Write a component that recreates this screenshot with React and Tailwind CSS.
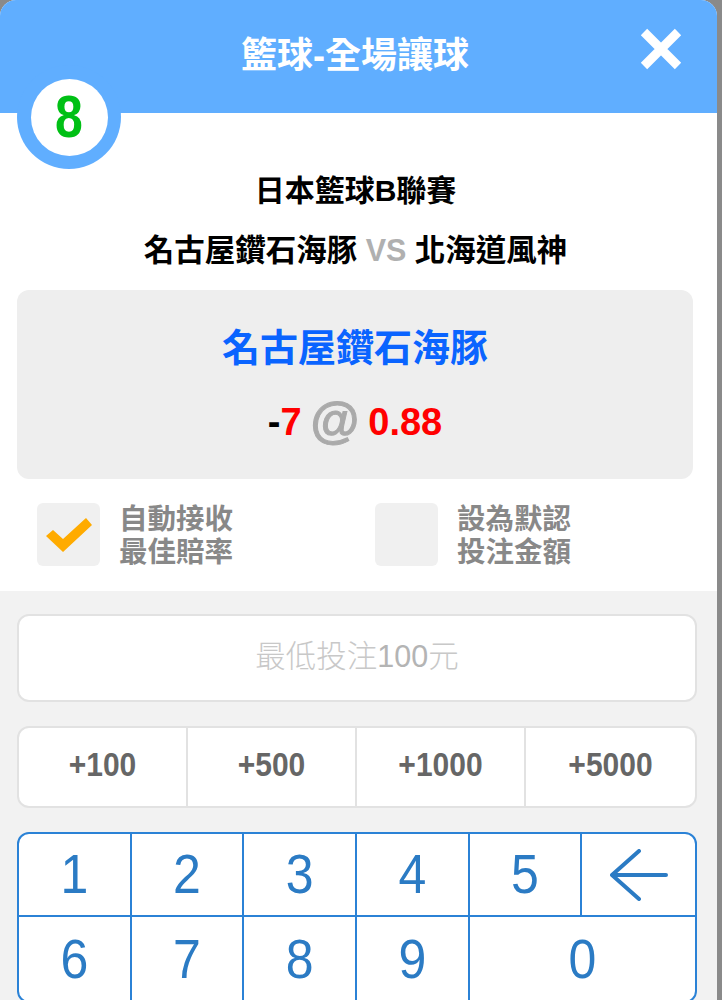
import React from 'react'

const sans = "font-['Liberation_Sans','Noto_Sans_CJK_TC',sans-serif]"

const chips = ['+100', '+500', '+1000', '+5000']

const Check = ({ checked, label1, label2, className }) => {
  return (
    <div className={`flex items-start ${className}`}>
      <div className='w-[63px] h-[63px] rounded-md bg-[#f0f0f0] flex items-center justify-center shrink-0'>
        {checked && (
          <svg width="46" height="34" viewBox="0 0 46 34">
            <polygon points="0,18 7,12 17,21 40,0 46,7 17,34" fill="#ffab00" />
          </svg>
        )}
      </div>
      <div className='ml-[19px] text-[28.5px] leading-[33px] font-bold text-[#888888]'>
        <div>{label1}</div>
        <div>{label2}</div>
      </div>
    </div>
  )
}

const Key = ({ children, className = '' }) => {
  return (
    <div className={`flex items-center justify-center text-[50px] text-[#2b7bc4] border-[#2b82d6] ${className}`}>
      <span className='scale-y-[1.1]'>{children}</span>
    </div>
  )
}

const App = () => {
  return (
    <div className={`w-[722px] h-[1000px] overflow-hidden bg-[#8a8a8a] ${sans}`}>
      <div className='w-[717px] h-[1000px] bg-white rounded-t-[16px] overflow-hidden flex flex-col'>
        {/* header */}
        <div className='relative h-[113px] shrink-0 bg-[#60aeff] flex items-center justify-center'>
          <div className='text-[36px] font-bold text-white mt-[-2px] ml-[-7px]'>籃球-全場讓球</div>
          <svg className='absolute right-[35px] top-[28px]' width="42" height="42" viewBox="0 0 42 42">
            <path d="M4 4 L38 38 M38 4 L4 38" stroke="#fff" strokeWidth="9" />
          </svg>
          <div className='absolute left-[17px] top-[65px] w-[104px] h-[104px] rounded-full bg-[#60aeff] flex items-center justify-center'>
            <div className='w-[77px] h-[77px] rounded-full bg-white flex items-center justify-center text-[50px] font-bold text-[#00c015]'>
              <span className='scale-y-[1.18]'>8</span>
            </div>
          </div>
        </div>

        {/* match info */}
        <div className='h-[478px] shrink-0 flex flex-col'>
          <div className='mt-[58px] pr-[6px] text-center text-[30px] leading-[40px] font-bold text-black'>日本籃球B聯賽</div>
          <div className='mt-[19px] pr-[6px] text-center text-[30.5px] leading-[40px] font-bold text-black'>
            名古屋鑽石海豚 <span className='text-[#b0b0b0]'>VS</span> 北海道風神
          </div>
          <div className='mt-[20px] ml-[17px] mr-[24px] h-[189px] rounded-xl bg-[#eeeeee] flex flex-col items-center'>
            <div className='mt-[33px] text-[38px] leading-[50px] font-bold text-[#0a64ff]'>名古屋鑽石海豚</div>
            <div className='mt-[23px] text-[38px] leading-[50px] font-bold flex items-center'>
              <span className='text-black'>-</span>
              <span className='text-[#ff0000]'>7</span>
              <span className='text-[#aaaaaa] text-[50px] mx-[9px] mb-[2px] [-webkit-text-stroke:1px_#aaaaaa]'>@</span>
              <span className='text-[#ff0000]'>0.88</span>
            </div>
          </div>
          <div className='flex mt-[24px] pl-[37px]'>
            <Check checked label1='自動接收' label2='最佳賠率' className='w-[338px]' />
            <Check label1='設為默認' label2='投注金額' />
          </div>
        </div>

        {/* bet panel */}
        <div className='flex-1 bg-[#f2f2f2] pl-[17px] pt-[23px] pr-[20px]'>
          <div className='h-[88px] rounded-xl bg-white border-2 border-[#e2e2e2] flex items-center justify-center text-[30.5px] font-light text-[#c8c8c8] pb-[2px]'>
            <span>最低投注<span className='font-normal text-[#b4b4b4]'>100</span>元</span>
          </div>
          <div className='mt-[24px] h-[82px] rounded-xl bg-white border-2 border-[#e2e2e2] grid grid-cols-4'>
            {chips.map((c, index) => (
              <div key={index} className={`flex items-center justify-center pb-[5px] text-[30px] font-bold text-[#666666] ${index < 3 ? 'border-r-2 border-[#e2e2e2]' : ''}`}>
                <span className='scale-y-[1.1]'>{c}</span>
              </div>
            ))}
          </div>
          <div className='mt-[24px] h-[171px] rounded-xl bg-white border-2 border-[#2b82d6] grid grid-cols-6 grid-rows-[83px_84px]'>
            <Key className='border-r-2 border-b-2'>1</Key>
            <Key className='border-r-2 border-b-2'>2</Key>
            <Key className='border-r-2 border-b-2'>3</Key>
            <Key className='border-r-2 border-b-2'>4</Key>
            <Key className='border-r-2 border-b-2'>5</Key>
            <div className='flex items-center justify-center border-b-2 border-[#2b82d6]'>
              <svg width="58" height="52" viewBox="0 0 58 52">
                <path d="M29 2 L2 26 M2 26 L29 50 M2 26 L56 26" fill="none" stroke="#2b7bc4" strokeWidth="4" strokeLinecap="round" />
              </svg>
            </div>
            <Key className='border-r-2'>6</Key>
            <Key className='border-r-2'>7</Key>
            <Key className='border-r-2'>8</Key>
            <Key className='border-r-2'>9</Key>
            <Key className='col-span-2'>0</Key>
          </div>
        </div>
      </div>
    </div>
  )
}

export default App
